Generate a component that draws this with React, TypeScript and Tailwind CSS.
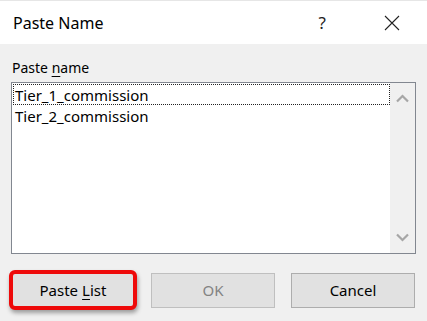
// Paste Name dialog (Excel style)

const NAMES = ['Tier_1_commission', 'Tier_2_commission']

function Chevron({ down }: { down?: boolean }) {
  return (
    <svg width="13" height="9" viewBox="0 0 13 9" className="block">
      <path
        d={down ? 'M1 1.5 L6.5 7 L12 1.5' : 'M1 7.5 L6.5 2 L12 7.5'}
        fill="none"
        stroke="#a6a6a6"
        strokeWidth="2.2"
      />
    </svg>
  )
}

export default function App() {
  return (
    <div className="w-[427px] h-[321px] bg-[#f0f0f0] flex flex-col text-black font-['Noto_Sans',sans-serif] overflow-hidden">
      {/* Title bar */}
      <div className="h-[44px] bg-white flex items-center shrink-0 border-t border-[#e6e6e6]">
        <span className="pl-[13px] text-[16px] leading-none">Paste Name</span>
        <span className="ml-auto mr-[58px] text-[17px] leading-none text-[#222]">?</span>
        <svg width="16" height="16" viewBox="0 0 16 16" className="mr-[27px]">
          <path d="M1 1 L15 15 M15 1 L1 15" stroke="#222" strokeWidth="1.1" fill="none" />
        </svg>
      </div>

      {/* Body */}
      <div className="flex flex-col px-[11px]">
        <div className="pt-[14px] pl-[1px] text-[14px] leading-[20px]">
          Paste <span className="underline underline-offset-[3px]">n</span>ame
        </div>

        <div className="mt-[4px] h-[172px] border border-[#828790] bg-white flex">
          <div className="flex-1 pt-[1px] pl-[1px]">
            {NAMES.map((n, i) => (
              <div
                key={n}
                className={`h-[21px] pl-[1px] text-[15px] leading-[20px] border border-dotted ${
                  i === 0 ? 'border-[#222]' : 'border-transparent'
                }`}
              >
                {n}
              </div>
            ))}
          </div>
          <div className="w-[25px] bg-[#f0f0f0] flex flex-col items-center justify-between py-[11px]">
            <Chevron />
            <Chevron down />
          </div>
        </div>

        {/* Buttons */}
        <div className="mt-[16px] flex items-center">
          <div className="-ml-[2px] w-[128px] h-[40px] border-[4px] border-[#ee0a0a] rounded-[6px] shadow-[1px_3px_4px_rgba(0,0,0,0.35)] bg-[#e1e1e1] flex items-center justify-center text-[15px]">
            Paste <span className="underline underline-offset-[3px] ml-[4px]">L</span>ist
          </div>
          <div className="ml-[14px] w-[124px] h-[35px] border border-[#bfbfbf] bg-[#e1e1e1] flex items-center justify-center text-[15px] text-[#838383]">
            OK
          </div>
          <div className="ml-[16px] w-[124px] h-[35px] border border-[#adadad] bg-[#e1e1e1] flex items-center justify-center text-[15px]">
            Cancel
          </div>
        </div>
      </div>
    </div>
  )
}
